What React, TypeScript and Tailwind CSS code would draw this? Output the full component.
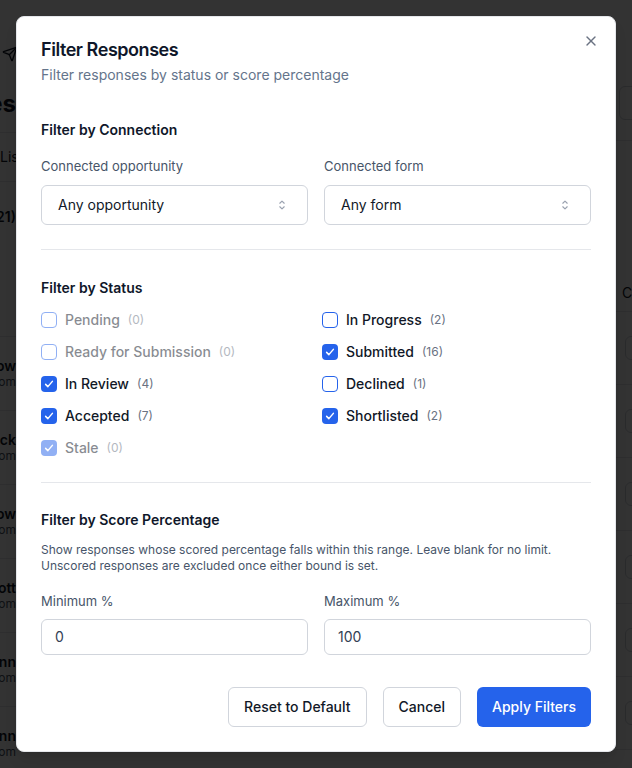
import React from "react";

const font = "font-['Inter','Noto_Sans',sans-serif]";

function CheckIcon() {
  return (
    <svg width="12" height="12" viewBox="0 0 16 16" fill="none">
      <path d="M3.5 8.5 L6.5 11.5 L12.5 4.5" stroke="white" strokeWidth="2" strokeLinecap="round" strokeLinejoin="round" />
    </svg>
  );
}

function UpDown() {
  return (
    <svg width="14" height="14" viewBox="0 0 16 16" fill="none" className="text-gray-400">
      <path d="M5.5 6 L8 3.5 L10.5 6" stroke="currentColor" strokeWidth="1.3" strokeLinecap="round" strokeLinejoin="round" />
      <path d="M5.5 10 L8 12.5 L10.5 10" stroke="currentColor" strokeWidth="1.3" strokeLinecap="round" strokeLinejoin="round" />
    </svg>
  );
}

type Status = { label: string; count: number; checked: boolean; disabled?: boolean };

const left: Status[] = [
  { label: "Pending", count: 0, checked: false, disabled: true },
  { label: "Ready for Submission", count: 0, checked: false, disabled: true },
  { label: "In Review", count: 4, checked: true },
  { label: "Accepted", count: 7, checked: true },
  { label: "Stale", count: 0, checked: true, disabled: true },
];
const right: Status[] = [
  { label: "In Progress", count: 2, checked: false },
  { label: "Submitted", count: 16, checked: true },
  { label: "Declined", count: 1, checked: false },
  { label: "Shortlisted", count: 2, checked: true },
];

function Row({ s }: { s: Status }) {
  return (
    <div className={`flex h-5 items-center ${s.disabled ? "opacity-50" : ""}`}>
      {s.checked ? (
        <span className="flex h-4 w-4 items-center justify-center rounded-[4px] bg-[#2563eb]">
          <CheckIcon />
        </span>
      ) : (
        <span className="h-4 w-4 rounded-[4px] border border-[#2563eb] bg-white" />
      )}
      <span className="ml-2 text-sm font-medium text-[#111827]">{s.label}</span>
      <span className="ml-2 text-xs text-gray-500">({s.count})</span>
    </div>
  );
}

function Background() {
  const rows = ["Harry Barrow", "Sam Tlock", "Harry Barrow", "Ann Scott", "Jo Dunn", "Jo Dunn"];
  const emails = ["harrow@x.com", "stlock@x.com", "harrow@x.com", "scott@x.com", "jmoe@x.com", "jmoe@x.com"];
  return (
    <div className="flex h-full w-full">
      <div className="flex w-4 shrink-0 flex-col overflow-hidden">
        <div className="flex h-[76px] shrink-0 items-end justify-end pb-[14px]">
          <svg width="16" height="16" viewBox="0 0 24 24" fill="none" stroke="#111827" strokeWidth="2" strokeLinecap="round" strokeLinejoin="round" className="shrink-0 -mr-[2px]">
            <path d="M14.536 21.686a.5.5 0 0 0 .937-.024l6.5-19a.496.496 0 0 0-.635-.635l-19 6.5a.5.5 0 0 0-.024.937l7.93 3.18a2 2 0 0 1 1.112 1.11z" />
            <path d="m21.854 2.147-10.94 10.939" />
          </svg>
        </div>
        <div className="flex h-[56px] shrink-0 items-center justify-end whitespace-nowrap text-2xl font-bold text-[#111827]">Responses</div>
        <div className="h-px shrink-0 bg-gray-200" />
        <div className="flex h-[48px] shrink-0 items-center whitespace-nowrap text-sm text-[#111827]">List</div>
        <div className="h-px shrink-0 bg-gray-200" />
        <div className="flex h-[70px] shrink-0 items-center justify-end whitespace-nowrap text-sm font-semibold text-[#111827]">All (21)</div>
        <div className="h-px shrink-0 bg-gray-200 mt-[84px]" />
        {rows.map((r, i) => (
          <div key={i} className="flex h-[74px] shrink-0 flex-col justify-center border-b border-gray-200">
            <div className="flex justify-end whitespace-nowrap text-sm font-semibold leading-4 text-[#111827]">{r}</div>
            <div className="flex justify-end whitespace-nowrap text-xs leading-4 text-gray-600">{emails[i]}</div>
          </div>
        ))}
      </div>
      <div className="flex-1" />
      <div className="flex w-4 shrink-0 flex-col overflow-hidden">
        <div className="h-[86px] shrink-0" />
        <div className="ml-[3px] h-[34px] w-[60px] shrink-0 rounded-md border border-gray-300" />
        <div className="mt-[20px] h-px shrink-0 bg-gray-200" />
        <div className="h-[134px] shrink-0" />
        <div className="flex h-[36px] shrink-0 items-center whitespace-nowrap pl-[6px] text-sm text-[#111827]">Created</div>
        <div className="h-px shrink-0 bg-gray-200" />
        {rows.map((_, i) => (
          <div key={i} className="flex h-[73px] shrink-0 items-center border-b border-gray-200 pl-[9px]">
            <div className="h-6 w-10 shrink-0 rounded-md border border-gray-300" />
          </div>
        ))}
      </div>
    </div>
  );
}

export default function App() {
  return (
    <div className={`relative h-[768px] w-full overflow-hidden bg-white ${font}`}>
      <Background />
      <div className="absolute inset-0 bg-black/80" />
      <div className="absolute left-4 top-4 w-[600px] rounded-lg border border-gray-200 bg-white p-6 shadow-lg">
        <button className="absolute right-4 top-4 text-gray-500">
          <svg width="16" height="16" viewBox="0 0 24 24" fill="none" stroke="currentColor" strokeWidth="2" strokeLinecap="round">
            <path d="M18 6 6 18" />
            <path d="m6 6 12 12" />
          </svg>
        </button>
        <h2 className="text-lg font-semibold leading-[18px] tracking-tight text-[#0f172a]">Filter Responses</h2>
        <p className="mt-1.5 text-sm leading-5 text-[#64748b]">Filter responses by status or score percentage</p>

        <h3 className="mt-[35px] text-sm font-semibold leading-5 text-[#0f172a]">Filter by Connection</h3>
        <div className="mt-4 grid grid-cols-2 gap-4">
          <div>
            <div className="text-[13px] leading-5 text-[#475569]">Connected opportunity</div>
            <div className="mt-[9px] flex h-10 items-center justify-between rounded-md border border-gray-300 pl-4 pr-[18px] text-sm text-[#111827]">
              <span>Any opportunity</span>
              <UpDown />
            </div>
          </div>
          <div>
            <div className="text-[13px] leading-5 text-[#475569]">Connected form</div>
            <div className="mt-[9px] flex h-10 items-center justify-between rounded-md border border-gray-300 pl-4 pr-[18px] text-sm text-[#111827]">
              <span>Any form</span>
              <UpDown />
            </div>
          </div>
        </div>

        <div className="mt-6 h-px bg-gray-200" />

        <h3 className="mt-7 text-sm font-semibold leading-5 text-[#0f172a]">Filter by Status</h3>
        <div className="mt-3 grid grid-cols-2 gap-x-3">
          <div className="flex flex-col gap-3">
            {left.map((s) => (
              <Row key={s.label} s={s} />
            ))}
          </div>
          <div className="flex flex-col gap-3">
            {right.map((s) => (
              <Row key={s.label} s={s} />
            ))}
          </div>
        </div>

        <div className="mt-6 h-px bg-gray-200" />

        <h3 className="mt-[27px] text-sm font-semibold leading-5 text-[#0f172a]">Filter by Score Percentage</h3>
        <p className="mt-3 text-xs leading-4 text-[#475569]">
          Show responses whose scored percentage falls within this range. Leave blank for no limit.
          <br />
          Unscored responses are excluded once either bound is set.
        </p>
        <div className="mt-[17px] grid grid-cols-2 gap-4">
          <div>
            <div className="text-[13px] leading-5 text-[#475569]">Minimum %</div>
            <div className="mt-2 flex h-9 items-center rounded-md border border-gray-300 px-[13px] text-sm text-[#334155]">0</div>
          </div>
          <div>
            <div className="text-[13px] leading-5 text-[#475569]">Maximum %</div>
            <div className="mt-2 flex h-9 items-center rounded-md border border-gray-300 px-[13px] text-sm text-[#334155]">100</div>
          </div>
        </div>

        <div className="mt-8 flex justify-end gap-4">
          <button className="h-10 rounded-md border border-gray-300 bg-white px-[15px] text-sm font-medium text-[#111827]">Reset to Default</button>
          <button className="h-10 rounded-md border border-gray-300 bg-white px-[15px] text-sm font-medium text-[#111827]">Cancel</button>
          <button className="h-10 rounded-md bg-[#2563eb] px-[15px] text-sm font-medium text-white">Apply Filters</button>
        </div>
      </div>
    </div>
  );
}
